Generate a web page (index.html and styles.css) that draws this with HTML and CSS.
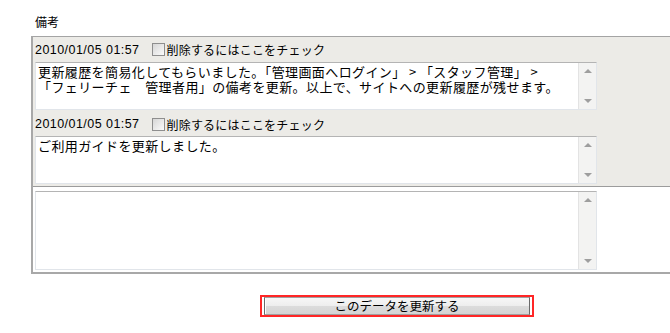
FILE: index.html
```html
<!DOCTYPE html>
<html lang="ja">
<head>
<meta charset="utf-8">
<title>備考</title>
<link rel="stylesheet" href="styles.css">
</head>
<body>
<div class="page">
  <div class="label">備考</div>
  <div class="box">
    <div class="history">
      <div class="entry">
        <div class="entry-head">
          <span class="date">2010/01/05 01:57</span>
          <label class="del"><input type="checkbox" class="cb">削除するにはここをチェック</label>
        </div>
        <div class="ta">
          <div class="ta-text">更新履歴を簡易化してもらいました。「管理画面へログイン」&nbsp;&gt;&nbsp;「スタッフ管理」&nbsp;&gt;<br>「フェリーチェ　管理者用」の備考を更新。以上で、サイトへの更新履歴が残せます。</div>
          <div class="sb"><span class="arrow up"></span><span class="arrow down"></span></div>
        </div>
      </div>
      <div class="entry entry-second">
        <div class="entry-head">
          <span class="date">2010/01/05 01:57</span>
          <label class="del"><input type="checkbox" class="cb">削除するにはここをチェック</label>
        </div>
        <div class="ta">
          <div class="ta-text">ご利用ガイドを更新しました。</div>
          <div class="sb"><span class="arrow up"></span><span class="arrow down"></span></div>
        </div>
      </div>
    </div>
    <div class="new">
      <div class="ta ta-tall">
        <div class="ta-text"></div>
        <div class="sb"><span class="arrow up"></span><span class="arrow down"></span></div>
      </div>
    </div>
  </div>
  <div class="actions">
    <div class="btn-wrap"><button type="submit" class="btn">このデータを更新する</button></div>
  </div>
</div>
</body>
</html>
```

FILE: styles.css
```css
html, body {
  margin: 0;
  padding: 0;
  background: #ffffff;
}

body {
  font-family: "Noto Sans CJK JP", "Liberation Sans", sans-serif;
  font-size: 12px;
  color: #000;
  overflow: hidden;
}

.page {
  padding: 15px 0 0 31px;
}

.label {
  margin-left: 4px;
  line-height: 14px;
  height: 14px;
  margin-bottom: 7px;
}

.box {
  border-top: 1px solid #a4a4a4;
  border-left: 2px solid #a8a8a8;
  border-bottom: 2px solid #a8a8a8;
}

.history {
  background: #ecebe7;
  padding: 0 0 2px 2px;
  border-bottom: 1px solid #9c9c9c;
}

.entry-head {
  height: 25px;
  display: flex;
  align-items: center;
  gap: 12px;
}

.entry-second .entry-head {
  height: 26px;
  padding-top: 2px;
  box-sizing: border-box;
}

.date {
  font-family: "Liberation Sans", sans-serif;
  font-size: 12.5px;
  letter-spacing: 0.45px;
}

.del {
  display: flex;
  align-items: center;
  gap: 2px;
  font-size: 12px;
  letter-spacing: 0.2px;
}

.cb {
  appearance: none;
  -webkit-appearance: none;
  margin: 0;
  width: 13px;
  height: 13px;
  box-sizing: border-box;
  border: 1px solid #8e8e8e;
  background: linear-gradient(135deg, #d6d6d6, #fbfbfb);
}

.ta {
  width: 562px;
  height: 48px;
  box-sizing: border-box;
  display: flex;
  background: #fff;
  border: 1px solid #e1e5ea;
  border-top-color: #b4b4b4;
}

.ta-text {
  flex: 1;
  padding: 1px 3px 0 2px;
  font-size: 13px;
  line-height: 15px;
  letter-spacing: 0.4px;
  white-space: nowrap;
  overflow: hidden;
}

.sb {
  width: 17px;
  background: #f3f3f2;
  border-left: 1px solid #e3e3e3;
  display: flex;
  flex-direction: column;
  justify-content: space-between;
  align-items: center;
  padding: 6px 0;
}

.arrow {
  width: 0;
  height: 0;
  border-left: 4px solid transparent;
  border-right: 4px solid transparent;
}

.arrow.up {
  border-bottom: 4px solid #9e9e9e;
}

.arrow.down {
  border-top: 4px solid #9e9e9e;
}

.new {
  background: #fff;
  padding: 4px 0 2px 2px;
}

.ta-tall {
  height: 79px;
}

.actions {
  margin-top: 21px;
  padding-left: 229px;
}

.btn-wrap {
  display: inline-flex;
  border: 2px solid #ff2626;
  padding: 0 2px;
}

.btn {
  width: 266px;
  height: 18px;
  margin: 0;
  padding: 0;
  font-family: "Noto Sans CJK JP", "Liberation Sans", sans-serif;
  font-size: 12.5px;
  line-height: 16px;
  color: #000;
  border: 1px solid #a0a0a0;
  border-left-color: #6a6a6a;
  border-right-color: #6a6a6a;
  box-shadow: inset 1px 0 0 #ffffff;
  background: linear-gradient(#f7f7f7 0%, #eeeeee 48%, #dcdcdc 52%, #d4d4d4 100%);
}
```
